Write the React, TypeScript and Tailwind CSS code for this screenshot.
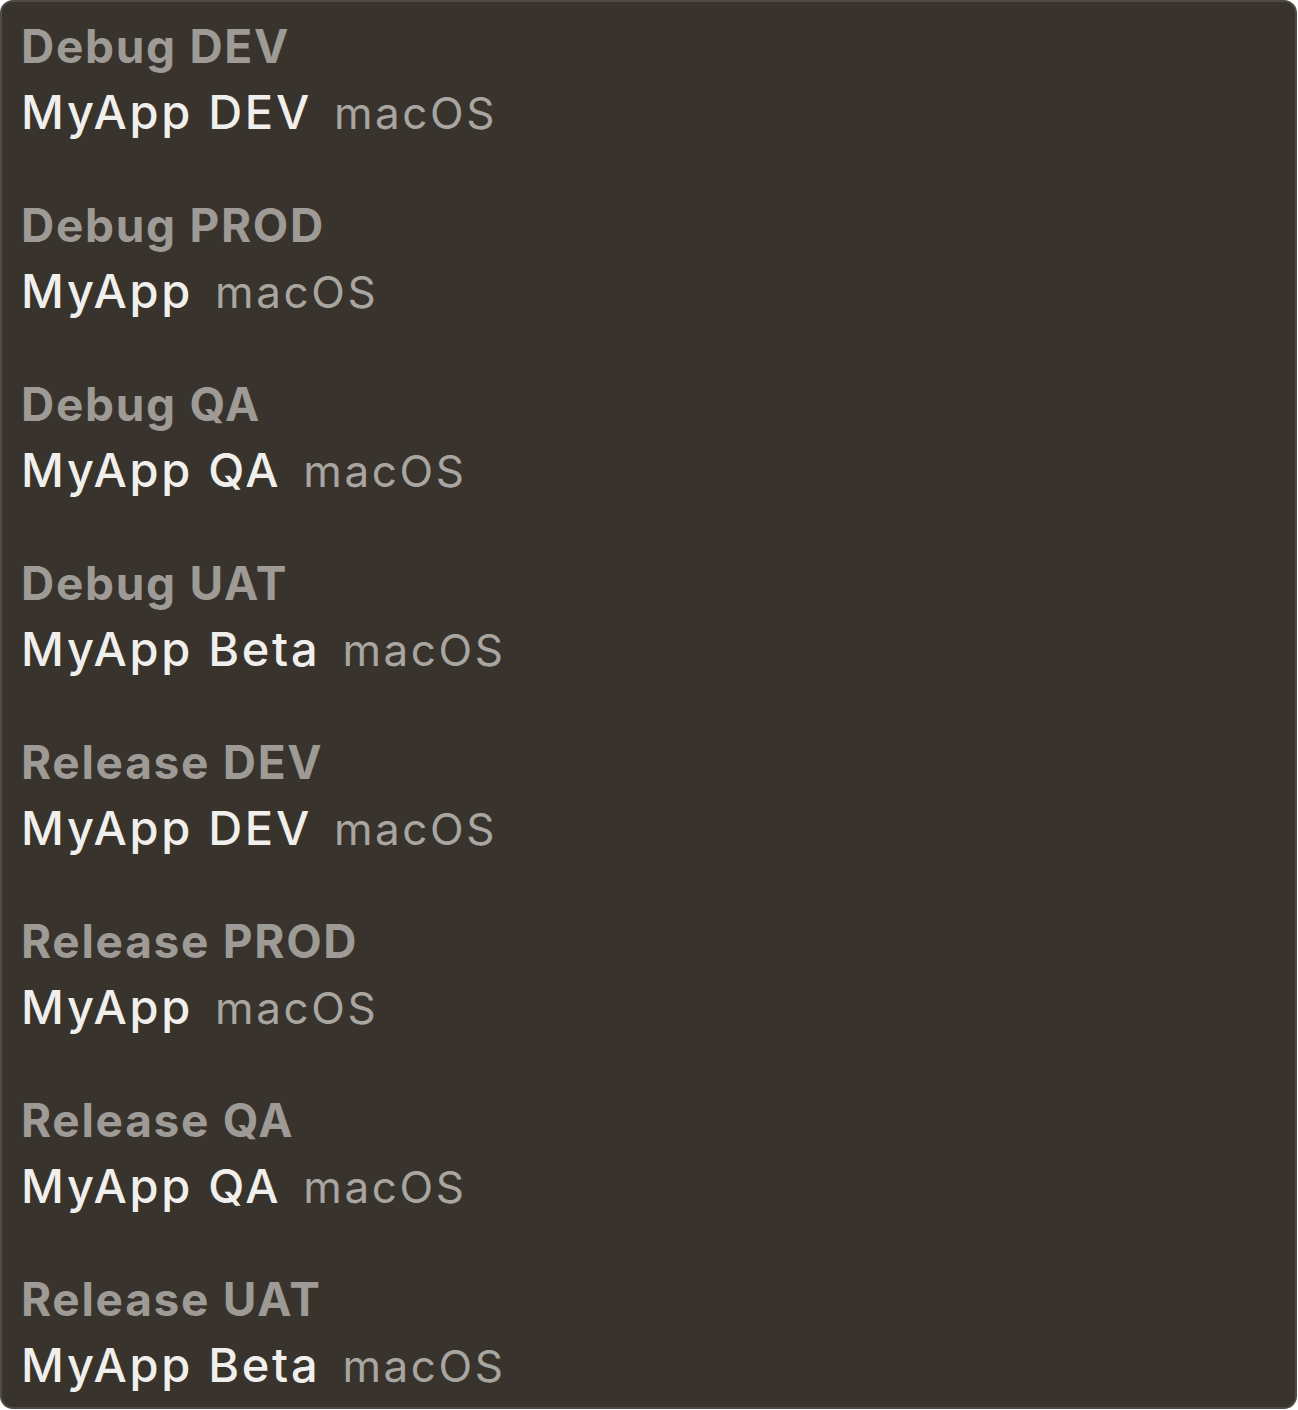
import React from "react";

const configs = [
    { name: "Debug DEV", app: "MyApp DEV" },
    { name: "Debug PROD", app: "MyApp" },
    { name: "Debug QA", app: "MyApp QA" },
    { name: "Debug UAT", app: "MyApp Beta" },
    { name: "Release DEV", app: "MyApp DEV" },
    { name: "Release PROD", app: "MyApp" },
    { name: "Release QA", app: "MyApp QA" },
    { name: "Release UAT", app: "MyApp Beta" },
];

export default function App() {
    return (
        <div className="w-[1298px] h-[1410px] bg-white">
            <div
                className="w-[1297px] h-[1409px] rounded-[13px] border-2 border-[#4f4a44] bg-[#38332d] pl-[19px] pt-[11px] flex flex-col gap-[47px]"
                style={{ fontFamily: "Inter, 'Open Sans', sans-serif" }}
            >
                {configs.map((c) => (
                    <div key={c.name} className="flex flex-col">
                        <div className="h-[66px] leading-[66px] text-[46px] font-bold text-[#9e9a95] tracking-[1.7px]">
                            {c.name}
                        </div>
                        <div className="h-[66px] leading-[66px] flex items-baseline gap-[22px]">
                            <span className="text-[47px] font-medium text-[#f1efec] tracking-[2.7px]">{c.app}</span>
                            <span className="text-[44px] text-[#a9a5a0] tracking-[2.6px]">macOS</span>
                        </div>
                    </div>
                ))}
            </div>
        </div>
    );
}
